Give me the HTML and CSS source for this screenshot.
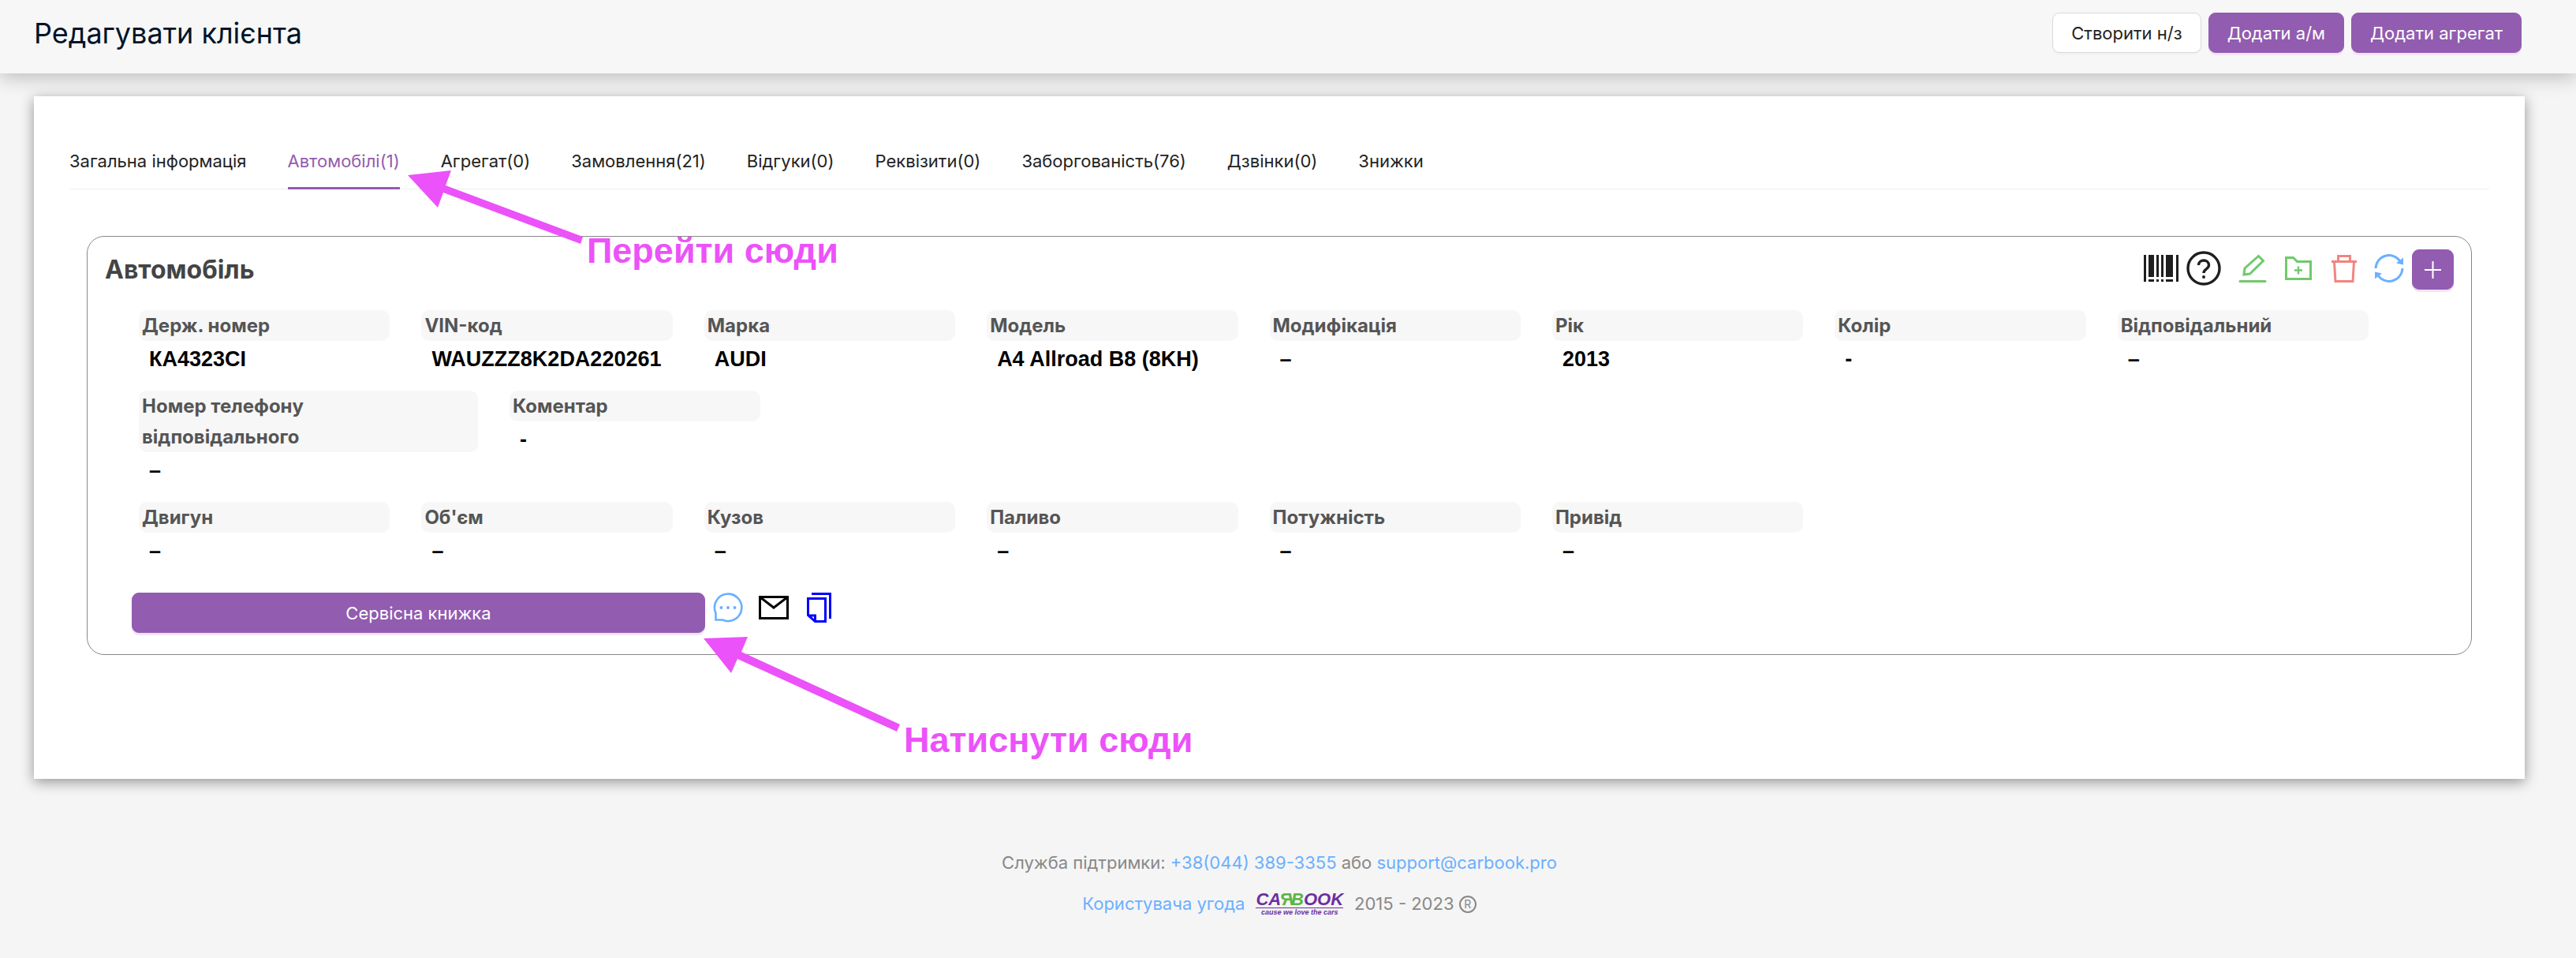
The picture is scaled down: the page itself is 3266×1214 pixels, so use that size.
FILE: index.html
```
<!DOCTYPE html>
<html lang="uk">
<head>
    <meta charset="UTF-8">
    <title>Редагувати клієнта</title>
    <link rel="stylesheet" href="styles.css">
</head>
<body>
<header class="header">
    <h1 class="title">Редагувати клієнта</h1>
    <div class="actions">
        <button type="button" class="btn">Створити н/з</button>
        <button type="button" class="btn btn-primary">Додати а/м</button>
        <button type="button" class="btn btn-primary">Додати агрегат</button>
    </div>
</header>

<main class="paper">
    <nav class="tabs">
        <a href="#">Загальна інформація</a>
        <a href="#" class="current">Автомобілі(1)</a>
        <a href="#">Агрегат(0)</a>
        <a href="#">Замовлення(21)</a>
        <a href="#">Відгуки(0)</a>
        <a href="#">Реквізити(0)</a>
        <a href="#">Заборгованість(76)</a>
        <a href="#">Дзвінки(0)</a>
        <a href="#">Знижки</a>
    </nav>

    <section class="vehicle">
        <div class="vehicle-head">
            <h2>Автомобіль</h2>
            <div class="tools">
                <button type="button" class="tool tool-dark" aria-label="Штрих-код">
                    <svg width="44" height="44" viewBox="0 0 44 44" fill="currentColor"><path d="M0 5h3v34H0zM6 5h7v28H6zM16 5h3v28h-3zM22 5h3v28h-3zM28 5h9v28h-9zM41 5h3v34h-3zM6 36h7v3H6zM16 36h3v3h-3zM22 36h3v3h-3zM28 36h9v3h-9z"/></svg>
                </button>
                <button type="button" class="tool tool-dark" aria-label="Довідка">
                    <svg width="44" height="44" viewBox="0 0 44 44" fill="none" stroke="currentColor" stroke-width="3.4"><circle cx="22" cy="22" r="20"/><path d="M15.500 18c0-8 13-8 13 0 0 5-6.500 5-6.500 10"/><circle cx="22" cy="33" r="2" fill="currentColor" stroke="none"/></svg>
                </button>
                <button type="button" class="tool tool-green" aria-label="Редагувати">
                    <svg width="36" height="36" viewBox="0 0 36 36" fill="none" stroke="currentColor" stroke-width="3"><path d="M7 26l1-8L25.500 2.500l6 6L14.500 25z"/><path d="M2 34.500h32" stroke-linecap="round"/></svg>
                </button>
                <button type="button" class="tool tool-green" aria-label="Додати в папку">
                    <svg width="36" height="36" viewBox="0 0 36 36" fill="none" stroke="currentColor" stroke-width="3"><path d="M2.500 4.500h9l5 5h17v22h-31z"/><path d="M18 15.500v10M13 20.500h10" stroke-width="2.400"/></svg>
                </button>
                <button type="button" class="tool tool-red" aria-label="Видалити">
                    <svg width="36" height="36" viewBox="0 0 36 36" fill="none" stroke="currentColor" stroke-width="3"><path d="M2 9.500h32M10.500 9V2.500h15V9M5.500 10l1.500 24.500h22l1.500-24.500"/></svg>
                </button>
                <button type="button" class="tool tool-blue" aria-label="Оновити">
                    <svg width="38" height="38" viewBox="0 0 38 38" fill="none" stroke="currentColor" stroke-width="3"><path d="M2 19A17 17 0 0 1 33 10M36 19A17 17 0 0 1 5 28"/><path d="M37 5.500v9l-9-2zM1 32.500v-9l9 2z" fill="currentColor" stroke="none"/></svg>
                </button>
                <button type="button" class="btn btn-primary btn-add" aria-label="Додати">
                    <svg width="21" height="22" viewBox="0 0 21 22" stroke="currentColor" stroke-width="2"><path d="M10.500 0v22M0 11h21"/></svg>
                </button>
            </div>
        </div>

        <dl class="fields">
            <div><dt>Держ. номер</dt><dd>КА4323СІ</dd></div>
            <div><dt>VIN-код</dt><dd>WAUZZZ8K2DA220261</dd></div>
            <div><dt>Марка</dt><dd>AUDI</dd></div>
            <div><dt>Модель</dt><dd>A4 Allroad B8 (8KH)</dd></div>
            <div><dt>Модифікація</dt><dd>–</dd></div>
            <div><dt>Рік</dt><dd>2013</dd></div>
            <div><dt>Колір</dt><dd>-</dd></div>
            <div><dt>Відповідальний</dt><dd>–</dd></div>
        </dl>
        <dl class="fields fields-extra">
            <div class="phone"><dt>Номер телефону відповідального</dt><dd>–</dd></div>
            <div class="comment"><dt>Коментар</dt><dd>-</dd></div>
        </dl>
        <dl class="fields">
            <div><dt>Двигун</dt><dd>–</dd></div>
            <div><dt>Об'єм</dt><dd>–</dd></div>
            <div><dt>Кузов</dt><dd>–</dd></div>
            <div><dt>Паливо</dt><dd>–</dd></div>
            <div><dt>Потужність</dt><dd>–</dd></div>
            <div><dt>Привід</dt><dd>–</dd></div>
        </dl>

        <div class="vehicle-foot">
            <button type="button" class="btn btn-primary btn-book">Сервісна книжка</button>
            <button type="button" class="tool tool-blue" aria-label="Повідомлення">
                <svg width="38" height="38" viewBox="0 0 38 38" fill="none" stroke="currentColor" stroke-width="2.600"><path d="M3.500 34.500V26A17.200 17.200 0 1 1 12 34.500z"/><g fill="currentColor" stroke="none"><circle cx="10.500" cy="19" r="2"/><circle cx="19" cy="19" r="2"/><circle cx="27.500" cy="19" r="2"/></g></svg>
            </button>
            <button type="button" class="tool tool-black" aria-label="Лист">
                <svg width="38" height="38" viewBox="0 0 38 38" fill="none" stroke="currentColor" stroke-width="3"><path d="M1.500 5.500h35v27h-35zM2 6l17 13L36 6"/></svg>
            </button>
            <button type="button" class="tool tool-copy" aria-label="Копіювати">
                <svg width="38" height="38" viewBox="0 0 38 38" fill="none" stroke="currentColor" stroke-width="3"><path d="M9 1.500h23.500V33M4.500 7.500h22v29h-13l-9-8zM4.500 29h9v7.500"/></svg>
            </button>
        </div>
    </section>
</main>

<footer class="footer">
    <p>Служба підтримки: <a href="tel:+380443893355">+38(044) 389-3355</a> або <a href="mailto:support@carbook.pro">support@carbook.pro</a></p>
    <p class="legal">
        <a href="#">Користувача угода</a>
        <span class="logo"><b>CA<i class="flip">R</i><i>B</i>OOK</b><small>cause we love the cars</small></span>
        <span>2015 - 2023 <span class="reg">R</span></span>
    </p>
</footer>

<!-- підказки поверх сторінки -->
<svg class="arrow arrow-tab" width="223" height="94" viewBox="0 0 223 94"><path d="M0 6L55 0 48 19 222 84 219 93 45 28 38 47z"/></svg>
<span class="hint hint-tab">Перейти сюди</span>
<svg class="arrow arrow-book" width="250" height="120" viewBox="0 0 250 120"><path d="M0 2L56 0 48 19 249 111 245 120 43 28 35 46z"/></svg>
<span class="hint hint-book">Натиснути сюди</span>
</body>
</html>
```
FILE: styles.css
```
* {
    box-sizing: border-box;
    margin: 0;
    padding: 0;
}

body {
    position: relative;
    background: #f5f5f5;
    color: #222;
    font-family: Inter, "Liberation Sans", sans-serif;
    font-size: 22px;
    line-height: 32px;
}

a {
    color: #6ab0ff;
    text-decoration: none;
}

.header {
    display: flex;
    justify-content: space-between;
    align-items: flex-start;
    height: 93px;
    padding: 16px 69px 0 43px;
    background: #f7f7f7;
    box-shadow: 0 4px 24px rgba(0, 0, 0, 0.25);
}

.title {
    color: #001529;
    font-size: 36px;
    font-weight: 400;
    line-height: 52px;
}

.actions {
    display: flex;
    gap: 9px;
}

.btn {
    height: 51px;
    padding: 0 23px;
    border: 1px solid #d9d9d9;
    border-radius: 9px;
    background: #fff;
    box-shadow: 0 3px 0 rgba(0, 0, 0, 0.02);
    color: #222;
    font: inherit;
}

.btn-primary {
    border-color: #925cb0;
    background: #925cb0;
    box-shadow: 0 3px 0 #f0e4f3;
    color: #fff;
}

.paper {
    position: relative;
    margin: 29px 65px 0 43px;
    padding: 49px 45px 157px;
    background: #fff;
    box-shadow: 0 4px 16px rgba(0, 0, 0, 0.4);
}

.tabs {
    display: flex;
    gap: 52px;
    border-bottom: 1px solid #f0f0f0;
}

.tabs a {
    margin-bottom: -1px;
    padding: 17px 0 17px;
    border-bottom: 3px solid transparent;
    color: #222;
}

.tabs .current {
    border-color: #925cb0;
    color: #925cb0;
}

.vehicle {
    margin: 59px 22px 0;
    padding: 16px 22px 27px;
    border: 1px solid #888;
    border-radius: 22px;
}

.vehicle-head {
    display: flex;
    justify-content: space-between;
}

.vehicle-head h2 {
    color: #444;
    font-size: 32px;
    font-weight: 700;
    line-height: 51px;
}

.tools {
    display: flex;
    align-items: center;
    gap: 10px;
}

.tool {
    display: flex;
    border: 0;
    background: none;
}

.tools .tool {
    margin-bottom: 4px;
}

.tool-dark {
    color: #1f1f1f;
}

.tool-green {
    margin-left: 12px;
    color: #70ca6c;
}

.tool-red {
    margin-left: 12px;
    color: #f08580;
}

.tool-blue {
    color: #6ab0ff;
}

.tool-black {
    color: #000;
}

.tool-copy {
    color: #00f;
}

.tools .tool-blue {
    margin-left: 10px;
}

.btn-add {
    display: flex;
    align-items: center;
    padding: 0 15px;
}

.fields {
    display: grid;
    grid-template-columns: repeat(8, 1fr);
    gap: 40px;
    margin: 20px 108px 0 43px;
}

.vehicle-head + .fields {
    margin-top: 26px;
}

.fields-extra {
    display: flex;
}

.phone {
    width: 430px;
}

.comment {
    width: calc((100% - 280px) / 8);
}

.fields dt {
    padding: 0 4px;
    border-radius: 10px;
    background: #f7f7f7;
    color: #555;
    font-size: 24px;
    font-weight: 700;
    line-height: 39px;
}

.phone dt {
    padding-right: 120px;
}

.fields dd {
    padding: 4px 13px 0;
    color: #000;
    font-family: "Liberation Sans", Arial, sans-serif;
    font-size: 27px;
    font-weight: 700;
    line-height: 39px;
}

.vehicle-foot {
    display: flex;
    gap: 20px;
    margin: 33px 36px 0 34px;
}

.btn-book {
    width: 25%;
    margin-right: -10px;
}

.footer {
    margin: 0 65px 0 43px;
    padding: 90px 0 50px;
    color: #888;
    text-align: center;
}

.legal {
    display: flex;
    justify-content: center;
    align-items: center;
    gap: 14px;
    margin-top: 20px;
}

.logo {
    color: #6b2fa0;
    font-family: "Liberation Sans", Arial, sans-serif;
    font-style: italic;
    font-weight: 700;
}

.logo b {
    display: block;
    border-bottom: 1px solid #6b2fa0;
    font-size: 22px;
    line-height: 20px;
}

.logo i {
    color: #5cb544;
}

.logo .flip {
    display: inline-block;
    margin-right: -3px;
    transform: scaleX(-1);
}

.logo small {
    display: block;
    font-size: 9px;
    line-height: 10px;
}

.reg {
    display: inline-block;
    width: 22px;
    height: 22px;
    border: 2px solid #888;
    border-radius: 50%;
    font-size: 14px;
    line-height: 18px;
    vertical-align: 2px;
}

.arrow,
.hint {
    position: absolute;
}

.arrow {
    fill: #ec52f9;
}

.hint {
    color: #ec52f9;
    font-family: "Liberation Sans", Arial, sans-serif;
    font-size: 45px;
    font-weight: 700;
    line-height: 52px;
}

.arrow-tab {
    left: 517px;
    top: 216px;
}

.hint-tab {
    left: 744px;
    top: 292px;
}

.arrow-book {
    left: 892px;
    top: 807px;
}

.hint-book {
    left: 1146px;
    top: 912px;
}
```
